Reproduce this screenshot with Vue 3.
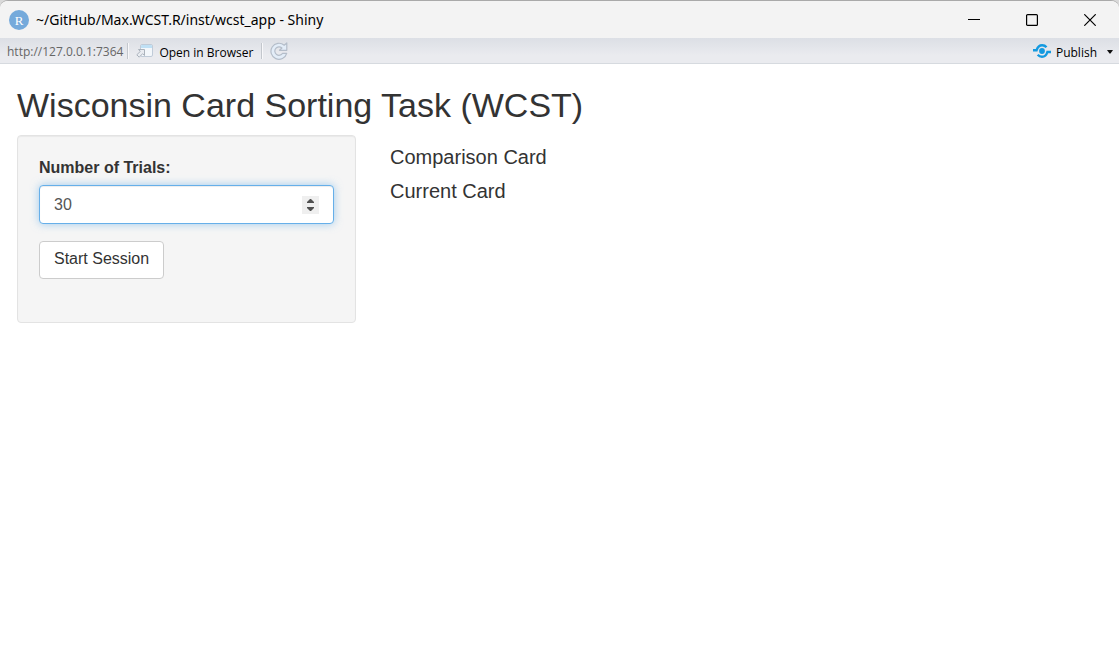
<script setup>
import { ref } from 'vue'

const trials = ref(30)
const outputs = ['Comparison Card', 'Current Card']
</script>

<template>
  <div class="window">
    <header class="titlebar">
      <svg class="app-icon" viewBox="0 0 20 20" aria-hidden="true">
        <circle cx="10" cy="10" r="10" fill="#75aadb" />
        <text x="10" y="14.500" text-anchor="middle" font-family="Liberation Serif, serif" font-size="13" fill="#fff">R</text>
      </svg>
      <span class="title">~/GitHub/Max.WCST.R/inst/wcst_app - Shiny</span>
      <button class="caption" aria-label="Minimize">
        <svg viewBox="0 0 12 12"><path d="M0 5.5H12" /></svg>
      </button>
      <button class="caption" aria-label="Maximize">
        <svg viewBox="0 0 12 12"><rect x=".6" y=".6" width="10.8" height="10.8" rx="1" /></svg>
      </button>
      <button class="caption" aria-label="Close">
        <svg viewBox="0 0 12 12"><path d="M.3.3 11.7 11.7M11.7.3.3 11.7" /></svg>
      </button>
    </header>

    <nav class="toolbar">
      <span class="url">http://127.0.0.1:7364</span>
      <span class="divider"></span>
      <button class="tool open">
        <svg class="open-icon" viewBox="0 0 17 14" aria-hidden="true">
          <rect x="4.5" y=".5" width="12" height="12" rx="1.5" fill="#f3f7fb" stroke="#c0cbd8" />
          <path d="M5 4V2q0-1 1-1h9q1 0 1 1v2z" fill="#bfe0f5" />
          <path d="M2.500 5.500H8.500V11.500L6.600 9.700 3.200 13.200.8 10.800 4.300 7.400z" fill="#e9ecf1" stroke="#a3abb6" stroke-width=".9" />
        </svg>
        <span class="tool-text">Open in Browser</span>
      </button>
      <span class="divider"></span>
      <button class="tool" aria-label="Reload">
        <svg class="reload-icon" viewBox="0 0 18 18" aria-hidden="true">
          <path d="M14.200 3.200 16.800 1V8.300H9.500L11.900 6A4.200 4.200 0 1 0 12.600 11.300H16.700A8 8 0 1 1 14.200 3.200Z" fill="#e3edf8" stroke="#b4bdc9" stroke-width="1.200" stroke-linejoin="round" />
        </svg>
      </button>
      <button class="tool publish">
        <svg class="publish-icon" viewBox="0 0 18 14" aria-hidden="true">
          <circle cx="9" cy="7" r="2.900" fill="#149ae0" />
          <path d="M0 6.200H3.600C4.600 3 6.500 1.300 9.200 1.300c1.800 0 3.200.7 4.300 2M18 8H14.400C13.400 11.300 11.600 12.800 9 12.800c-1.800 0-3.200-.7-4.300-2" fill="none" stroke="#149ae0" stroke-width="2.400" />
        </svg>
        <span class="tool-text">Publish</span>
        <svg class="caret" viewBox="0 0 6 4" aria-hidden="true"><path d="M0 0H6L3.500 3.500H2.500Z" fill="#111" /></svg>
      </button>
    </nav>

    <main class="page">
      <h1>Wisconsin Card Sorting Task (WCST)</h1>
      <div class="layout">
        <form class="well" @submit.prevent>
          <label for="trials">Number of Trials:</label>
          <div class="number-box">
            <input id="trials" v-model.number="trials" type="number" />
            <div class="stepper">
              <button type="button" aria-label="Increase" @click="trials++">
                <svg viewBox="0 0 7 4"><path d="M3 0H4L7 3V4H0V3Z" /></svg>
              </button>
              <button type="button" aria-label="Decrease" @click="trials--">
                <svg viewBox="0 0 7 4"><path d="M3 4H4L7 1V0H0V1Z" /></svg>
              </button>
            </div>
          </div>
          <button type="submit" class="start">Start Session</button>
        </form>
        <section class="outputs">
          <h4 v-for="name in outputs" :key="name">{{ name }}</h4>
        </section>
      </div>
    </main>
  </div>
</template>

<style>
html {
  background: #d9d9d9;
}
</style>

<style scoped>
.window {
  min-height: 100vh;
  box-sizing: border-box;
  background: #fff;
  border-top: 1px solid #a9a9a9;
  border-radius: 8px 8px 0 0;
  overflow: hidden;
  color: #333;
}
button {
  border: 0;
  padding: 0;
  background: none;
  font: inherit;
  color: inherit;
}
svg {
  display: block;
}
.titlebar {
  display: flex;
  align-items: center;
  height: 37px;
  padding-left: 9px;
  background: #f3f3f3;
  color: #000;
}
.app-icon {
  width: 20px;
  height: 20px;
}
.title {
  flex: 1;
  margin-left: 7px;
  font: 14px/20px "Noto Sans", "Open Sans", sans-serif;
}
.caption {
  display: flex;
  align-items: center;
  justify-content: center;
  width: 58px;
  height: 37px;
}
.caption svg {
  width: 12px;
  height: 12px;
  fill: none;
  stroke: #000;
  stroke-width: 1.2;
}
.toolbar {
  display: flex;
  align-items: center;
  box-sizing: border-box;
  height: 26px;
  padding: 0 6px 0 7px;
  background: linear-gradient(#dcdfe5, #eaebef 70%);
  border-bottom: 1px solid #d6dadf;
  font: 12px/16px "Open Sans", "Noto Sans", sans-serif;
  color: #000;
}
.url {
  padding-top: 2px;
  color: #666;
}
.tool-text {
  padding-top: 4px;
}
.divider {
  width: 1px;
  height: 16px;
  margin: 0 8px;
  background: #c3c7cd;
  box-shadow: 1px 0 #f8f8fa;
}
.url + .divider {
  margin-left: 4px;
}
.tool {
  display: flex;
  align-items: center;
}
.open {
  gap: 6px;
}
.open-icon {
  width: 17px;
  height: 14px;
}
.reload-icon {
  width: 18px;
  height: 18px;
}
.publish {
  margin-left: auto;
  gap: 5px;
}
.publish-icon {
  width: 18px;
  height: 14px;
}
.caret {
  width: 6px;
  height: 4px;
  margin: 3px 0 0 5px;
}
.page {
  padding: 21px 17px;
  font: 16px/23px "Liberation Sans", Arial, sans-serif;
}
h1 {
  margin: 0 0 10px;
  font-size: 34px;
  line-height: 40px;
  font-weight: 400;
}
.layout {
  display: grid;
  grid-template-columns: 1fr 2fr;
  margin: 0 -17px;
  align-items: start;
}
.well {
  margin: 0 17px;
  padding: 20px 21px 43px;
  background: #f5f5f5;
  border: 1px solid #e3e3e3;
  border-radius: 4px;
  box-shadow: inset 0 1px 1px rgba(0, 0, 0, 0.05);
}
label {
  display: block;
  margin-bottom: 6px;
  font-weight: 700;
}
.number-box {
  display: flex;
  align-items: center;
  box-sizing: border-box;
  height: 39px;
  margin-bottom: 17px;
  padding: 0 14px;
  background: #fff;
  border: 1px solid #66afe9;
  border-radius: 4px;
  box-shadow: inset 0 1px 1px rgba(0, 0, 0, 0.075), 0 0 9px rgba(102, 175, 233, 0.6);
}
.number-box input {
  flex: 1;
  min-width: 0;
  padding: 0;
  border: 0;
  outline: 0;
  background: none;
  color: #555;
  font: inherit;
  appearance: textfield;
}
.stepper {
  display: flex;
  flex-direction: column;
  align-items: center;
  justify-content: center;
  gap: 4px;
  width: 17px;
  height: 18px;
  background: #efefef;
}
.stepper svg {
  width: 7px;
  height: 4px;
  fill: #505050;
}
.start {
  box-sizing: border-box;
  height: 38px;
  padding: 0 14px 4px;
  background: #fff;
  border: 1px solid #ccc;
  border-radius: 4px;
}
.outputs {
  padding: 11px 17px 0;
}
h4 {
  margin: 0 0 12px;
  font-size: 20px;
  line-height: 22px;
  font-weight: 400;
}
</style>
